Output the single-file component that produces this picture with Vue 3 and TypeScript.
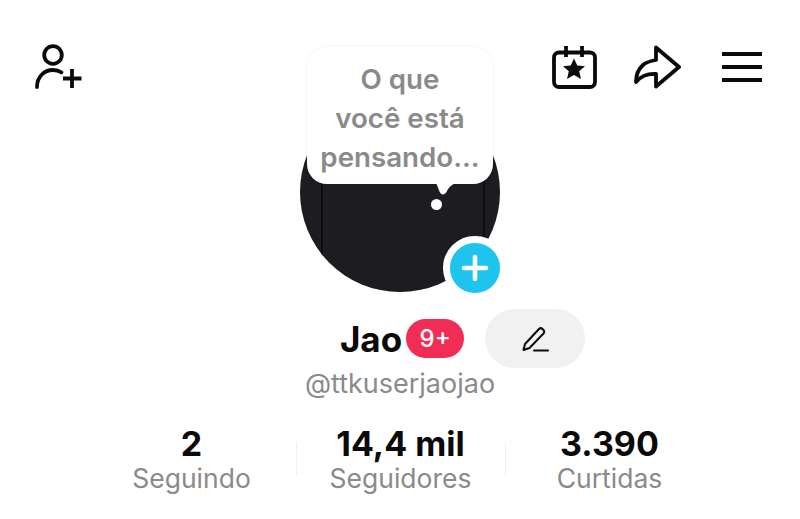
<script setup lang="ts">
const stats: { value: string; label: string }[] = [
  { value: '2', label: 'Seguindo' },
  { value: '14,4 mil', label: 'Seguidores' },
  { value: '3.390', label: 'Curtidas' },
]
</script>

<template>
  <main class="page">
    <header class="top">
      <svg class="add-user" width="50" height="46" viewBox="0 0 50 46" fill="none" stroke="#0a0a0a" stroke-width="3.800">
        <circle cx="19" cy="11" r="8.800" />
        <path d="M3 43c0-10 7-17 16-17 3 0 6 .8 8.500 2.300" stroke-linecap="round" />
        <path d="M29 34.500h18.500M38 25v19" />
      </svg>
      <div class="avatar-wrap">
        <div class="avatar">
          <span class="edge edge-l"></span>
          <span class="edge edge-r"></span>
        </div>
        <div class="bubble">
          <span>O que<br />você está<br />pensando...</span>
        </div>
        <svg class="notch" width="24" height="14" viewBox="0 0 24 14"><path d="M3 0h21c-5 1-8 4-10 8-1 3-4 4-5.500 3C6.500 10 5.500 5 3 0z" fill="#fff" /></svg>
        <i class="dot"></i>
        <div class="plus">
          <svg width="28" height="28" viewBox="0 0 28 28"><path d="M14 3v22M3 14h22" stroke="#fff" stroke-width="4.600" stroke-linecap="round" /></svg>
        </div>
      </div>
      <div class="actions">
        <svg width="45" height="43" viewBox="0 0 45 43" fill="none" stroke="#0a0a0a" stroke-width="3.800">
          <rect x="2" y="6.500" width="41" height="34.500" rx="5" />
          <path d="M14 0v11M30 0v11" />
          <path d="M22 12.500l3.300 7 7.700.7-5.800 5.100 1.800 7.600-7-4-7 4 1.800-7.600-5.800-5.100 7.700-.7z" fill="#0a0a0a" stroke="none" />
        </svg>
        <svg class="share" width="47" height="44" viewBox="0 0 47 44" fill="none" stroke="#0a0a0a" stroke-width="3.800" stroke-linejoin="round">
          <path d="M22 2.500L45 22 22 41.500V29C13 28.500 7 31 2 37c0-8 2.500-13 7-17 3-2.500 7-4 13-5z" />
        </svg>
        <div class="menu"><i></i><i></i><i></i></div>
      </div>
    </header>

    <section class="identity">
      <div class="name-row">
        <div class="name-group">
          <h1>Jao</h1>
          <span class="badge">9+</span>
        </div>
        <button class="edit" type="button" aria-label="Editar">
          <svg width="28" height="26" viewBox="0 0 28 26" fill="none" stroke="#0a0a0a" stroke-width="2" stroke-linejoin="round">
            <path d="M2.500 24l1.500-6L18 3c1-1 2.500-1 3.500 0l1 1c1 1 1 2.500 0 3.500L8.500 22z" />
            <path d="M13 24.500h14" stroke-linecap="round" />
          </svg>
        </button>
      </div>
      <p class="handle">@ttkuserjaojao</p>
    </section>

    <section class="stats">
      <div v-for="s in stats" :key="s.label" class="stat">
        <strong>{{ s.value }}</strong>
        <span>{{ s.label }}</span>
      </div>
    </section>
  </main>
</template>

<style>
html, body { margin: 0; background: #fff; overflow: hidden; }
</style>

<style scoped>
.page {
  width: 800px;
  height: 519px;
  padding-top: 44px;
  box-sizing: border-box;
  font-family: Inter, "Liberation Sans", sans-serif;
  color: #0a0a0a;
  background: #fff;
  overflow: hidden;
}
.top {
  display: grid;
  grid-template-columns: 1fr 200px 1fr;
  align-items: start;
}
.add-user { margin-left: 34px; }
.avatar-wrap {
  position: relative;
  padding-top: 48px;
}
.avatar {
  position: relative;
  width: 200px;
  height: 200px;
  border-radius: 50%;
  background: #1d1c20;
  overflow: hidden;
}
.edge {
  position: absolute;
  top: 0;
  bottom: 0;
  width: 2px;
  background: #0b0d10;
}
.edge-l { left: 21px; }
.edge-r { right: 15px; }
.bubble {
  position: absolute;
  left: 7px;
  top: 3px;
  width: 186px;
  height: 137px;
  box-sizing: border-box;
  padding-top: 6px;
  border-radius: 20px;
  background: #fff;
  box-shadow: 0 0 4px rgba(0, 0, 0, 0.06);
  display: flex;
  align-items: center;
  justify-content: center;
  text-align: center;
  font-size: 27.700px;
  font-weight: 600;
  line-height: 39px;
  color: #8a8a8a;
}
.notch {
  position: absolute;
  left: 133px;
  top: 139px;
}
.dot {
  position: absolute;
  left: 131px;
  top: 155px;
  width: 11px;
  height: 11px;
  border-radius: 50%;
  background: #fff;
}
.plus {
  position: absolute;
  left: 143px;
  top: 192px;
  width: 50px;
  height: 50px;
  border: 7px solid #fff;
  border-radius: 50%;
  background: #1fc4ee;
  display: flex;
  align-items: center;
  justify-content: center;
}
.actions {
  display: flex;
  align-items: center;
  justify-content: flex-end;
  padding: 1px 38px 0 0;
}
.share { margin-left: 37px; }
.menu {
  margin-left: 41px;
  width: 40px;
  display: flex;
  flex-direction: column;
  gap: 9.500px;
}
.menu i {
  display: block;
  height: 3.500px;
  background: #0a0a0a;
}
.identity {
  margin-top: 17px;
}
.name-row {
  display: grid;
  grid-template-columns: 1fr auto 1fr;
  align-items: center;
  height: 59px;
  padding-left: 4px;
}
.name-group {
  grid-column: 2;
  display: flex;
  align-items: center;
  gap: 4px;
}
h1 {
  margin: 0;
  font-size: 35px;
  font-weight: 700;
  line-height: 40px;
}
.badge {
  width: 58px;
  height: 39px;
  border-radius: 19.500px;
  background: #f22d55;
  color: #fff;
  font-size: 24px;
  font-weight: 500;
  display: flex;
  align-items: center;
  justify-content: center;
}
.edit {
  grid-column: 3;
  justify-self: start;
  margin-left: 21px;
  width: 100px;
  height: 59px;
  padding: 0;
  border: 0;
  border-radius: 30px;
  background: #f1f1f2;
  display: flex;
  align-items: center;
  justify-content: center;
}
.handle {
  margin: 0;
  text-align: center;
  font-size: 27px;
  line-height: 32px;
  color: #8a8a8a;
}
.stats {
  margin: 24px 0 0 87px;
  display: grid;
  grid-template-columns: repeat(3, 209px);
}
.stat {
  position: relative;
  display: flex;
  flex-direction: column;
  align-items: center;
}
.stat + .stat::before {
  content: "";
  position: absolute;
  left: 0;
  top: 18px;
  height: 34px;
  width: 1px;
  background: #f0f0f0;
}
.stat strong {
  font-size: 34px;
  font-weight: 700;
  line-height: 39px;
}
.stat span {
  margin-top: -1px;
  font-size: 26.500px;
  line-height: 32px;
  color: #8a8a8a;
}
</style>
